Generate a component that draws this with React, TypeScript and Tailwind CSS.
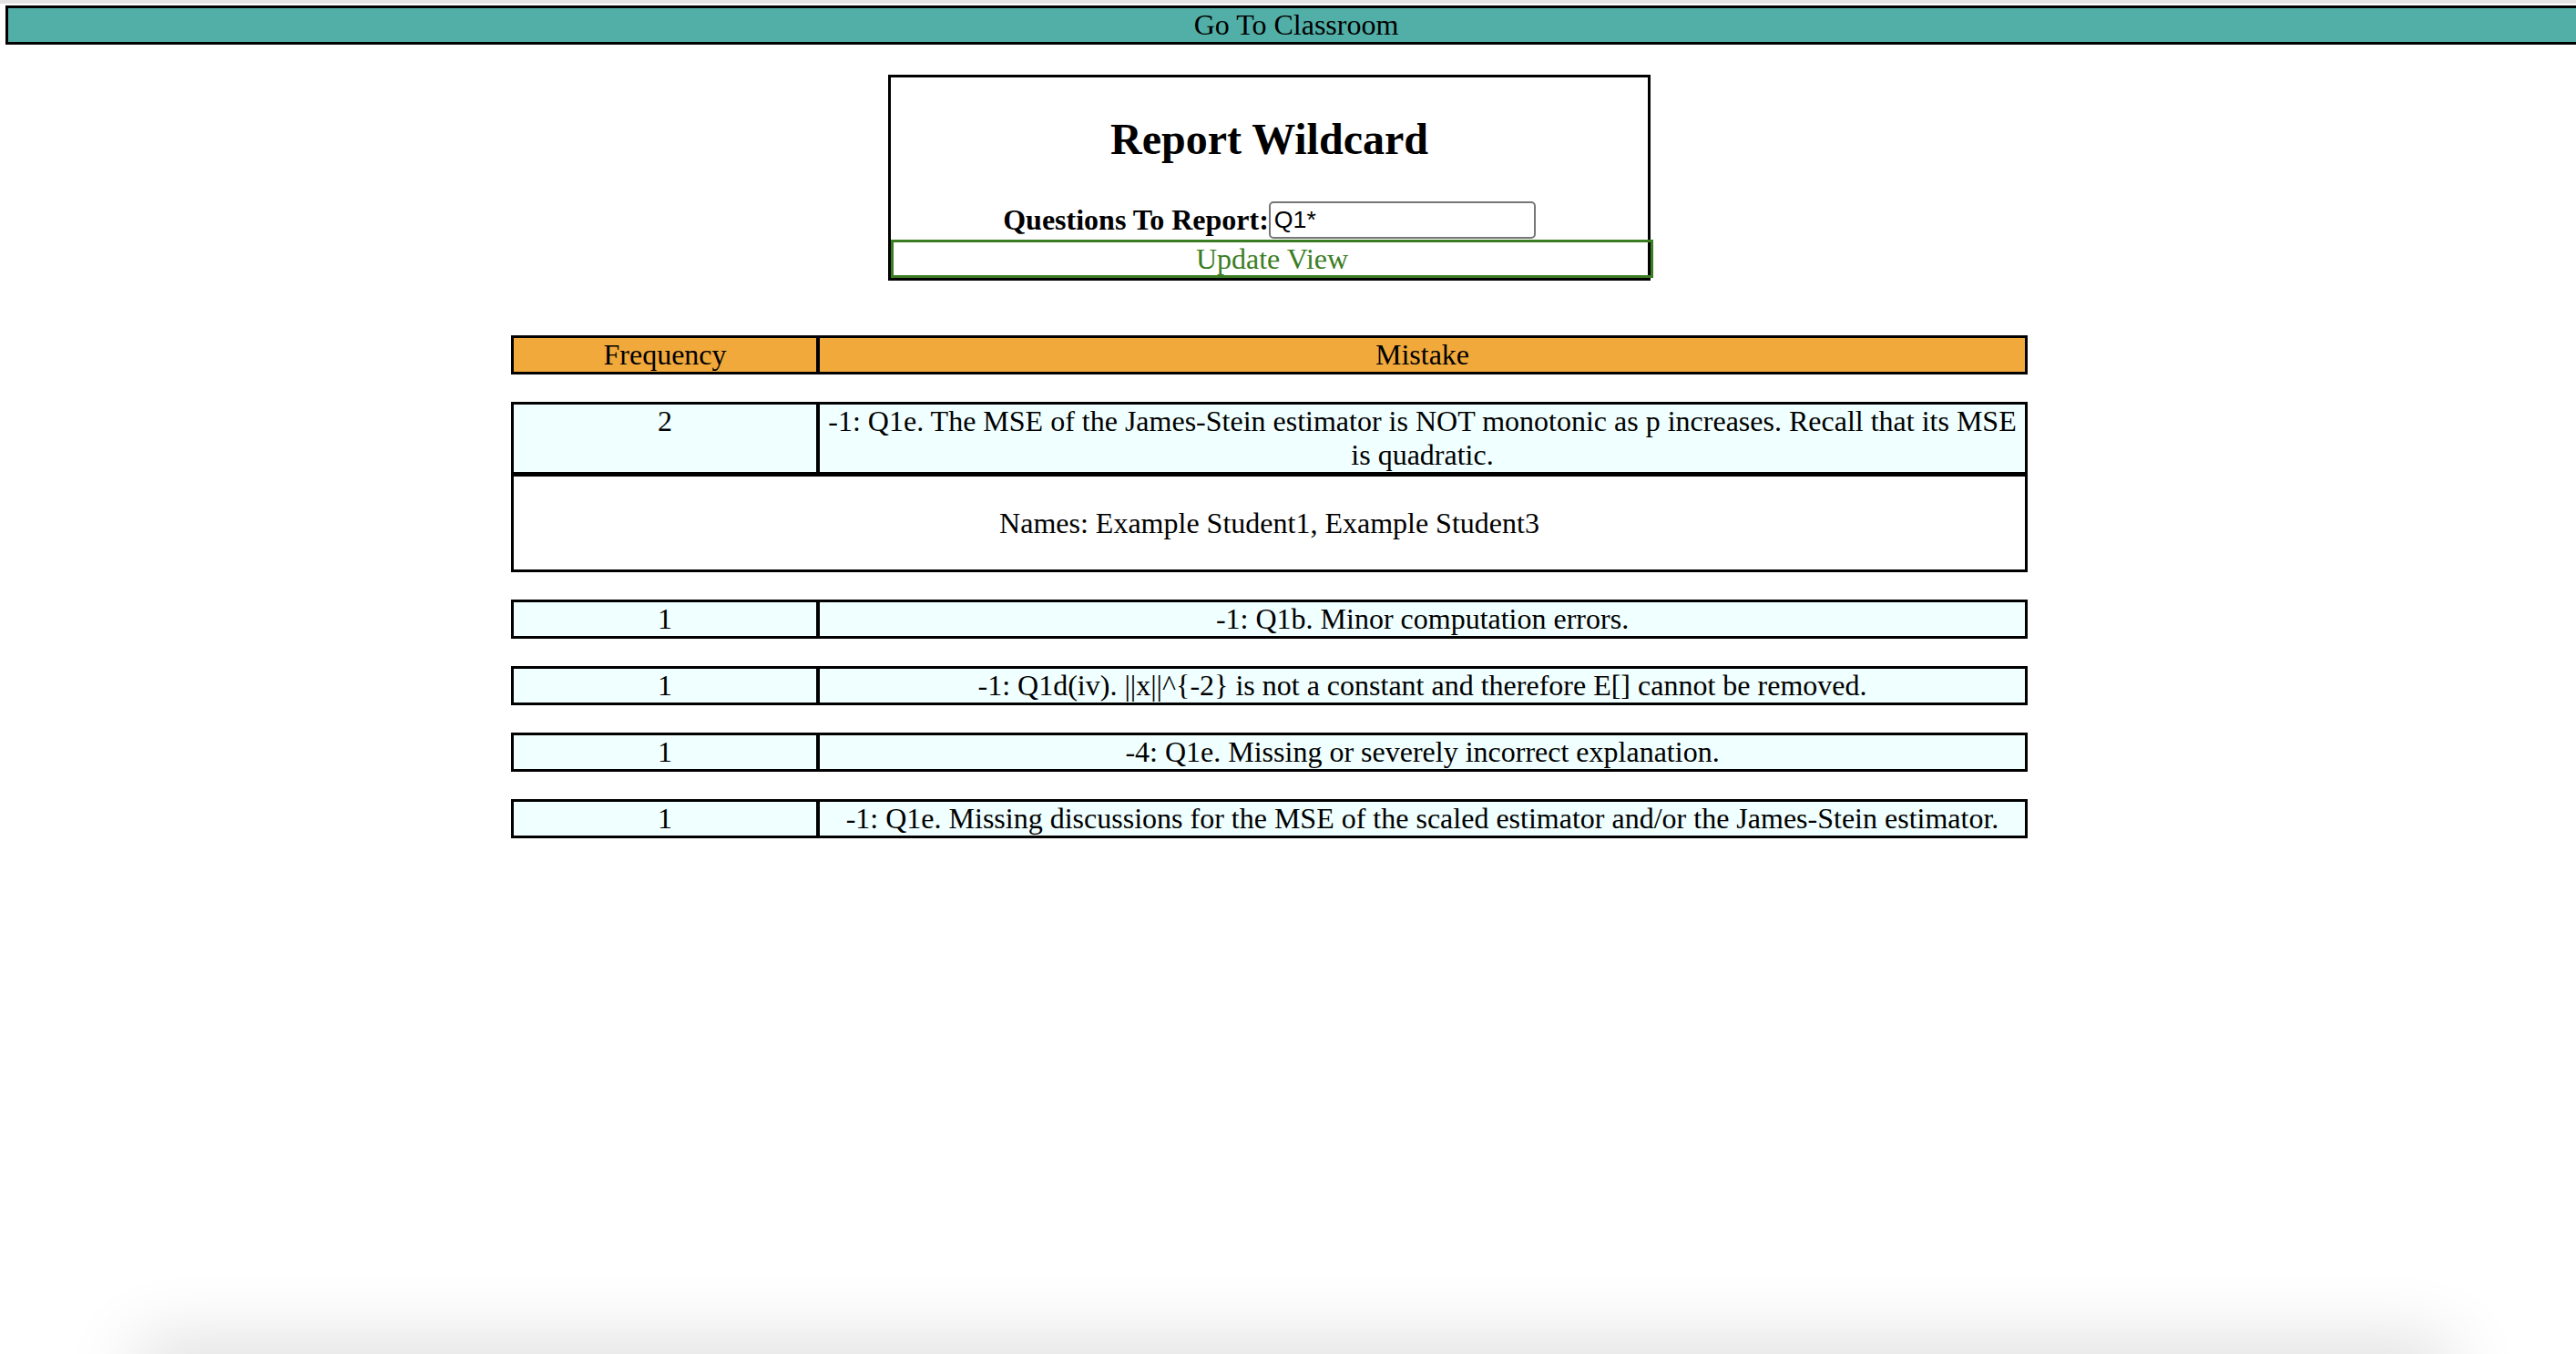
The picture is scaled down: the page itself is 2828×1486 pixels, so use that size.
import { useState } from "react";

const mistakes = [
  { freq: 1, text: "-1: Q1b. Minor computation errors." },
  {
    freq: 1,
    text: "-1: Q1d(iv). ||x||^{-2} is not a constant and therefore E[] cannot be removed.",
  },
  { freq: 1, text: "-4: Q1e. Missing or severely incorrect explanation." },
  {
    freq: 1,
    text: "-1: Q1e. Missing discussions for the MSE of the scaled estimator and/or the James-Stein estimator.",
  },
];

const serif = "font-['Liberation_Serif','Times_New_Roman',serif]";

const MistakeRow = ({
  freq,
  text,
  className = "",
}: {
  freq: number | string;
  text: string;
  className?: string;
}) => (
  <div className={`flex border-[3px] border-black bg-[#f0ffff] ${className}`}>
    <div className="w-[336px] shrink-0 border-r-4 border-black px-[2px] text-center">
      {freq}
    </div>
    <div className="flex-1 px-[2px] text-center">{text}</div>
  </div>
);

const App = () => {
  const [query, setQuery] = useState("Q1*");

  return (
    <div
      className={`relative min-h-screen overflow-hidden bg-white text-[32px] leading-[37px] text-black ${serif}`}
    >
      <div className="h-[4px] bg-[#e3e3e3]" />

      {/* Top nav */}
      <button className="mt-[2px] ml-[6px] box-content block h-[37px] w-full border-[3px] border-black bg-[#52afa7] text-center">
        Go To Classroom
      </button>

      <div className="flex w-[2787px] flex-col items-center">
        {/* Query box */}
        <div className="mt-[33px] w-[837px] border-[3px] border-black">
          <h2 className="mt-[40px] mb-[40px] text-center text-[48px] font-bold leading-[55px]">
            Report Wildcard
          </h2>
          <div className="flex h-[43px] items-center justify-center">
            <label className="font-bold">Questions To Report:</label>
            <input
              value={query}
              onChange={(e) => setQuery(e.target.value)}
              className="h-[41px] w-[293px] rounded-[5px] border-2 border-[#767676] px-[4px] font-['Liberation_Sans',Arial,sans-serif] text-[26.7px] outline-none"
            />
          </div>
          <button className="block h-[42px] w-[837px] border-[3px] border-[#3b7d23] text-center text-[#3b7d23]">
            Update View
          </button>
        </div>

        {/* Table */}
        <div className="mt-[60px] w-[1665px]">
          <div className="flex h-[43px] border-[3px] border-black bg-[#f2a93c]">
            <div className="w-[336px] shrink-0 border-r-4 border-black text-center">
              Frequency
            </div>
            <div className="flex-1 text-center">Mistake</div>
          </div>

          <MistakeRow
            className="mt-[30px]"
            freq={2}
            text="-1: Q1e. The MSE of the James-Stein estimator is NOT monotonic as p increases. Recall that its MSE is quadratic."
          />
          <div className="flex h-[107px] items-center justify-center border-x-[3px] border-t-[2px] border-b-[3px] border-black">
            Names: Example Student1, Example Student3
          </div>

          {mistakes.map((m) => (
            <MistakeRow key={m.text} className="mt-[30px] h-[43px]" freq={m.freq} text={m.text} />
          ))}
        </div>
      </div>

      {/* bottom shade */}
      <div className="fixed top-full right-[148px] left-[160px] h-[40px] shadow-[0_0_80px_10px_rgba(0,0,0,0.16)]" />
    </div>
  );
};

export default App;
